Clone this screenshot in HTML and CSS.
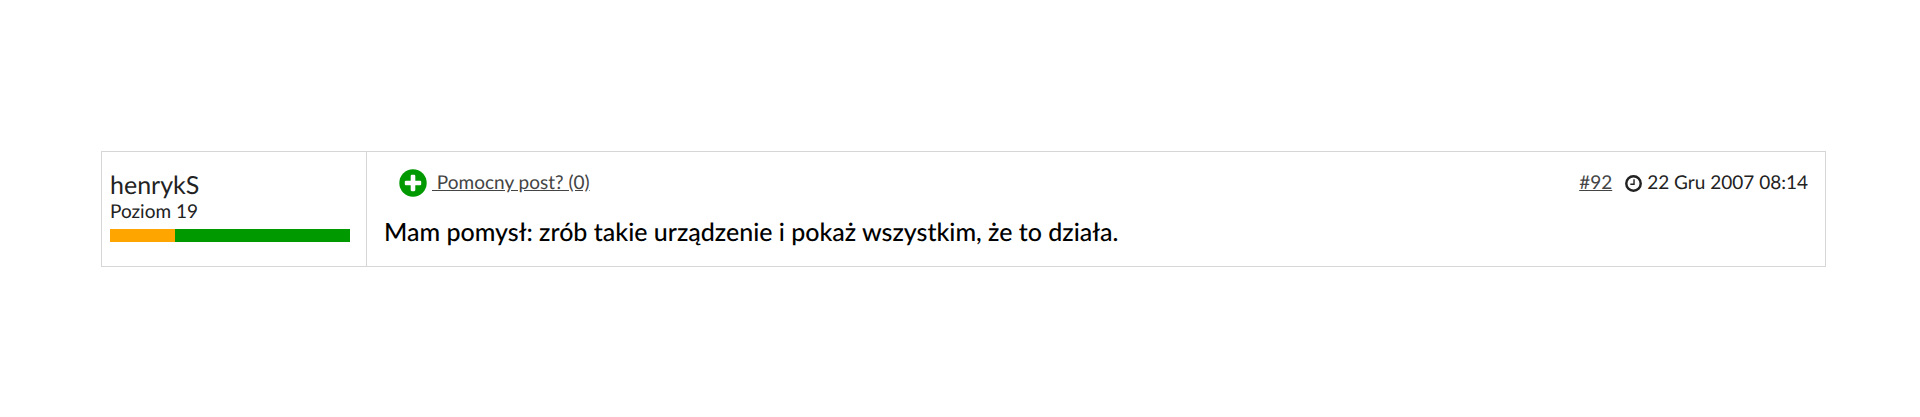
FILE: index.html
```html
<!DOCTYPE html>
<html lang="pl">
<head>
    <meta charset="UTF-8">
    <meta name="viewport" content="width=device-width, initial-scale=1.0">
    <title>Forum</title>
    <link rel="stylesheet" href="styles.css">
</head>
<body>
    <article class="post">
        <!-- Author -->
        <div class="author">
            <div class="author-name">henrykS</div>
            <div class="author-level">Poziom 19</div>
            <div class="level-bar">
                <div class="level-progress" style="width: 27%"></div>
            </div>
        </div>

        <!-- Post -->
        <div class="content">
            <div class="post-header">
                <a href="#helpful" class="helpful">
                    <svg class="icon-plus" viewBox="0 0 28 28" aria-hidden="true">
                        <circle cx="14" cy="14" r="13.7" fill="#009900"/>
                        <rect x="11.7" y="5.8" width="4.6" height="16.4" rx="1.1" fill="#ffffff"/>
                        <rect x="5.8" y="11.7" width="16.4" height="4.6" rx="1.1" fill="#ffffff"/>
                    </svg>
                    <span class="helpful-text">&nbsp;Pomocny post? (0)</span>
                </a>
                <div class="post-info">
                    <a href="#92" class="post-number">#92</a>
                    <svg class="icon-clock" viewBox="0 0 16 16" aria-hidden="true">
                        <circle cx="8" cy="8" r="6.8" fill="none" stroke="#222222" stroke-width="2.3"/>
                        <path d="M8.5 4v4.7H5" fill="none" stroke="#222222" stroke-width="1.3"/>
                    </svg>
                    <time datetime="2007-12-22T08:14">22 Gru 2007 08:14</time>
                </div>
            </div>
            <p class="post-text">Mam pomysł: zrób takie urządzenie i pokaż wszystkim, że to działa.</p>
        </div>
    </article>
</body>
</html>
```
FILE: styles.css
```css
body {
    font-family: Lato, sans-serif;
    margin: 0;
    padding: 151px 94px 0 101px;
    font-size: 19px;
    line-height: 24px;
    text-rendering: geometricPrecision;
    color: #222222;
    background-color: #ffffff;
}

.post {
    display: flex;
    border: 1px solid #d6d6d6;
}

/* Author column */
.author {
    flex: 0 0 240px;
    padding: 18px 16px 24px 8px;
    border-right: 1px solid #d6d6d6;
}

.author-name {
    font-size: 25px;
    line-height: 30px;
}

.author-level {
    margin-bottom: 5px;
}

.level-bar {
    height: 13px;
    background-color: #009900;
}

.level-progress {
    height: 100%;
    background-color: #ffa500;
}

/* Post column */
.content {
    flex: 1;
    padding: 17px 17px 16px 17px;
}

.post-header {
    display: flex;
    justify-content: space-between;
    align-items: center;
    margin-bottom: 19px;
}

.helpful {
    display: flex;
    align-items: center;
    gap: 5px;
    margin-left: 15px;
    color: #444444;
    text-decoration: none;
}

.helpful-text {
    text-decoration: underline;
}

.icon-plus {
    width: 28px;
    height: 28px;
}

.post-info {
    display: flex;
    align-items: center;
}

.post-number {
    margin-right: 13px;
    color: #444444;
}

.icon-clock {
    width: 17px;
    height: 17px;
    margin-right: 5px;
}

.post-text {
    margin: 0;
    font-size: 25px;
    font-weight: 500;
    line-height: 32px;
    color: #000000;
}
```
